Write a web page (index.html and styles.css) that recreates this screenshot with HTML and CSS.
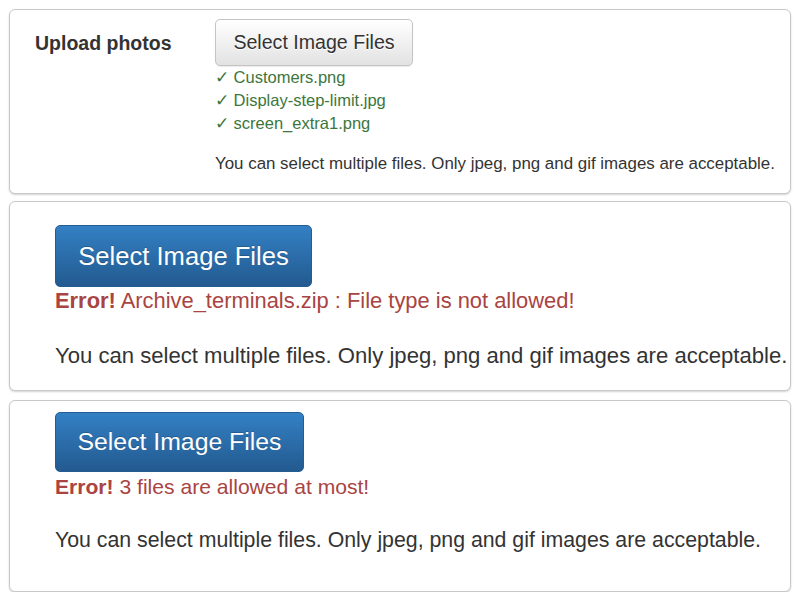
FILE: index.html
```html
<!DOCTYPE html>
<html>
<head>
<meta charset="utf-8">
<link rel="stylesheet" href="styles.css">
</head>
<body>
<div class="page">
  <section class="panel panel-form">
    <div class="label">Upload photos</div>
    <div class="field">
      <button class="btn btn-default">Select Image Files</button>
      <ul class="files">
        <li>✓ Customers.png</li>
        <li>✓ Display-step-limit.jpg</li>
        <li>✓ screen_extra1.png</li>
      </ul>
      <p class="help help-sm">You can select multiple files. Only jpeg, png and gif images are acceptable.</p>
    </div>
  </section>
  <section class="panel panel-lg">
    <button class="btn btn-primary btn-lg">Select Image Files</button>
    <p class="error error-lg"><strong>Error!</strong> Archive_terminals.zip : File type is not allowed!</p>
    <p class="help help-lg">You can select multiple files. Only jpeg, png and gif images are acceptable.</p>
  </section>
  <section class="panel panel-md">
    <button class="btn btn-primary btn-md">Select Image Files</button>
    <p class="error error-md"><strong>Error!</strong> 3 files are allowed at most!</p>
    <p class="help help-md">You can select multiple files. Only jpeg, png and gif images are acceptable.</p>
  </section>
</div>
</body>
</html>
```
FILE: styles.css
```css
html, body {
  margin: 0;
  padding: 0;
  background: #fff;
}
body {
  font-family: "Liberation Sans", Arial, sans-serif;
  color: #333;
}
.page {
  padding: 9px 9px 0 9px;
  display: flex;
  flex-direction: column;
  width: 782px;
}
.panel {
  border: 1px solid #c9c9c9;
  border-radius: 6px;
  box-shadow: 0 1px 2px rgba(0, 0, 0, 0.18);
  background: #fff;
  box-sizing: border-box;
}
.panel-form {
  display: flex;
  height: 185px;
  padding: 9px 0 0 25px;
}
.label {
  width: 180px;
  font-weight: bold;
  font-size: 19.5px;
  line-height: 24px;
  padding-top: 12px;
}
.btn {
  font-family: inherit;
  display: block;
  border-radius: 5px;
  margin: 0;
  padding: 0;
  cursor: pointer;
}
.btn-default {
  width: 198px;
  height: 47px;
  font-size: 19.6px;
  color: #333;
  border: 1px solid #c4c4c4;
  background: linear-gradient(#ffffff, #e2e2e2);
  text-shadow: 0 1px 0 #fff;
  box-shadow: 0 1px 1px rgba(0, 0, 0, 0.08);
}
.files {
  list-style: none;
  margin: 0;
  padding: 0;
  color: #3c763d;
  font-size: 16.5px;
  line-height: 23px;
}
.help {
  margin: 0;
}
.help-sm {
  font-size: 16.9px;
  line-height: 20px;
  margin-top: 19px;
}
.panel-lg {
  margin-top: 7px;
  height: 190px;
  padding: 23px 0 0 45px;
}
.btn-primary {
  color: #fff;
  border: 1px solid #245d92;
  background: linear-gradient(#3380c4, #235a90);
  text-shadow: 0 -1px 0 rgba(0, 0, 0, 0.2);
}
.btn-lg {
  width: 257px;
  height: 62px;
  font-size: 25.6px;
}
.error {
  color: #a94442;
  margin: 0;
}
.error-lg {
  font-size: 21.9px;
  line-height: 26px;
  margin-top: 1px;
}
.help-lg {
  font-size: 22.1px;
  line-height: 26px;
  margin-top: 29px;
}
.panel-md {
  margin-top: 9px;
  height: 192px;
  padding: 11px 0 0 45px;
}
.btn-md {
  width: 249px;
  height: 60px;
  font-size: 24.8px;
}
.error-md {
  font-size: 21.1px;
  line-height: 24px;
  margin-top: 3px;
}
.help-md {
  font-size: 21.3px;
  line-height: 24px;
  margin-top: 29px;
}
```
